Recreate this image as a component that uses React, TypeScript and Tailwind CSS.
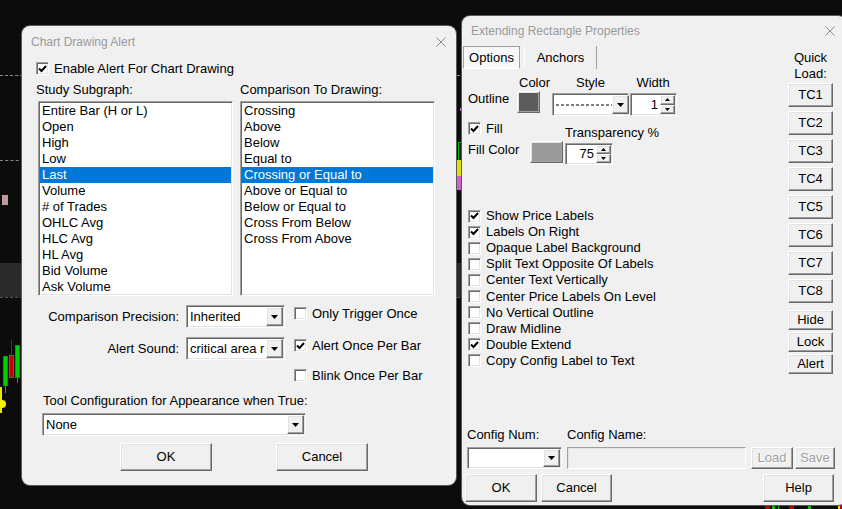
import React from "react";

const raised =
  "bg-[#f0f0f0] border border-t-white border-l-white border-r-[#696969] border-b-[#696969] shadow-[inset_-1px_-1px_#a0a0a0,inset_1px_1px_#e3e3e3]";
const raisedFrame =
  "border border-t-white border-l-white border-r-[#696969] border-b-[#696969] shadow-[inset_-1px_-1px_#a0a0a0,inset_1px_1px_#e3e3e3]";
const sunken =
  "border border-t-[#a0a0a0] border-l-[#a0a0a0] border-r-white border-b-white shadow-[inset_1px_1px_#696969,inset_-1px_-1px_#e3e3e3]";

const subgraphs = [
  "Entire Bar (H or L)",
  "Open",
  "High",
  "Low",
  "Last",
  "Volume",
  "# of Trades",
  "OHLC Avg",
  "HLC Avg",
  "HL Avg",
  "Bid Volume",
  "Ask Volume",
];

const comparisons = [
  "Crossing",
  "Above",
  "Below",
  "Equal to",
  "Crossing or Equal to",
  "Above or Equal to",
  "Below or Equal to",
  "Cross From Below",
  "Cross From Above",
];

const options = [
  { label: "Show Price Labels", on: true },
  { label: "Labels On Right", on: true },
  { label: "Opaque Label Background", on: false },
  { label: "Split Text Opposite Of Labels", on: false },
  { label: "Center Text Vertically", on: false },
  { label: "Center Price Labels On Level", on: false },
  { label: "No Vertical Outline", on: false },
  { label: "Draw Midline", on: false },
  { label: "Double Extend", on: true },
  { label: "Copy Config Label to Text", on: false },
];

function Check({ on = false }: { on?: boolean }) {
  return (
    <span className={`w-[13px] h-[13px] shrink-0 bg-white flex items-center justify-center ${sunken}`}>
      {on && (
        <svg width="9" height="8" viewBox="0 0 9 8">
          <polyline points="1,3.5 3.5,6 8,1" fill="none" stroke="#000" strokeWidth="2" />
        </svg>
      )}
    </span>
  );
}

function CloseX() {
  return (
    <svg width="10" height="10" viewBox="0 0 10 10">
      <path d="M0.5 0.5L9.5 9.5M9.5 0.5L0.5 9.5" stroke="#8a8a8a" strokeWidth="1" />
    </svg>
  );
}

function DropBtn() {
  return (
    <span className={`w-[17px] shrink-0 flex items-center justify-center ${raised}`}>
      <svg width="7" height="4" viewBox="0 0 7 4">
        <path d="M0 0h7L3.5 4z" fill="#000" />
      </svg>
    </span>
  );
}

function Combo({ className, children }: { className: string; children?: React.ReactNode }) {
  return (
    <div className={`flex p-[1px] bg-white ${sunken} ${className}`}>
      <span className="flex-1 min-w-0 overflow-hidden whitespace-nowrap pl-[2px] self-center">{children}</span>
      <DropBtn />
    </div>
  );
}

function Spin({ className, value }: { className: string; value: string }) {
  return (
    <div className={`flex p-[1px] bg-white ${sunken} ${className}`}>
      <span className="flex-1 text-right pr-[2px] self-center">{value}</span>
      <span className="w-[15px] flex flex-col">
        <span className={`flex-1 flex items-center justify-center ${raised}`}>
          <svg width="5" height="3" viewBox="0 0 5 3">
            <path d="M0 3h5L2.5 0z" fill="#000" />
          </svg>
        </span>
        <span className={`flex-1 flex items-center justify-center ${raised}`}>
          <svg width="5" height="3" viewBox="0 0 5 3">
            <path d="M0 0h5L2.5 3z" fill="#000" />
          </svg>
        </span>
      </span>
    </div>
  );
}

function Btn({
  className,
  children,
  disabled = false,
}: {
  className: string;
  children: React.ReactNode;
  disabled?: boolean;
}) {
  return (
    <div
      className={`flex items-center justify-center ${raised} ${className} ${
        disabled ? "text-[#a0a0a0] [text-shadow:1px_1px_#ffffff]" : ""
      }`}
    >
      {children}
    </div>
  );
}

function ListBox({ items, selected }: { items: string[]; selected: number }) {
  return (
    <div className={`w-[195px] h-[195px] bg-white p-[1px] overflow-hidden ${sunken}`}>
      {items.map((it, i) => (
        <div
          key={it}
          className={`h-4 leading-4 pl-[2px] whitespace-nowrap ${i === selected ? "bg-[#0078d7] text-white" : ""}`}
        >
          {it}
        </div>
      ))}
    </div>
  );
}

function Chart() {
  return (
    <>
      <div className="absolute left-0 top-[75px] w-[470px] border-t border-dashed border-[#8a8a8a]" />
      <div className="absolute left-0 top-[160px] w-[24px] border-t border-dashed border-[#8a8a8a]" />
      <div className="absolute left-0 top-[263px] w-[470px] h-[34px] bg-[#2a2a2a]" />
      <div className="absolute left-0 top-[297px] w-[470px] border-t border-dashed border-[#555]" />
      <div className="absolute left-[2px] top-[195px] w-[6px] h-[10px] bg-[#c09a9a]" />
      <div className="absolute left-[21px] top-[315px] w-[1px] h-[30px] bg-[#00c000]" />
      {/* candles */}
      <div className="absolute left-[5px] top-[385px] w-[1px] h-[8px] bg-[#00c000]" />
      <div className="absolute left-[3px] top-[356px] w-[5px] h-[30px] bg-[#00d000] border border-[#00a000]" />
      <div className="absolute left-[11px] top-[340px] w-[1px] h-[16px] bg-[#d00000]" />
      <div className="absolute left-[9px] top-[355px] w-[5px] h-[23px] bg-[#c00000] border border-[#00a000]" />
      <div className="absolute left-[17px] top-[378px] w-[1px] h-[5px] bg-[#00c000]" />
      <div className="absolute left-[15px] top-[345px] w-[5px] h-[33px] bg-[#00d000] border border-[#00a000]" />
      <div className="absolute left-0 top-[387px] w-[2px] h-[26px] bg-[#e8e800]" />
      <div className="absolute left-0 top-[400px] w-[6px] h-[8px] bg-[#f0f000] rounded-r-sm" />
      {/* between the dialogs */}
      <div className="absolute left-[460px] top-[108px] w-[2px] h-[3px] bg-[#d070d0]" />
      <div className="absolute left-[458px] top-[142px] w-[6px] h-[36px] border border-[#00c000]" />
      <div className="absolute left-[456px] top-[160px] w-[1px] h-[38px] bg-[#00c000]" />
      <div className="absolute left-[457px] top-[160px] w-[5px] h-[16px] bg-[#e0e000]" />
      <div className="absolute left-[457px] top-[176px] w-[4px] h-[14px] bg-[#d060d0]" />
      {/* bottom edge */}
      <div className="absolute left-[765px] top-[505px] w-[5px] h-[4px] bg-[#c00000]" />
      <div className="absolute left-[772px] top-[505px] w-[3px] h-[4px] bg-[#00c000]" />
      <div className="absolute left-[778px] top-[505px] w-[1px] h-[4px] bg-[#00c000]" />
      <div className="absolute left-[789px] top-[505px] w-[5px] h-[4px] bg-[#c00000]" />
      <div className="absolute left-[808px] top-[505px] w-[3px] h-[4px] bg-[#00c000]" />
      <div className="absolute left-[838px] top-[505px] w-[2px] h-[4px] bg-[#e0e000]" />
      <div className="absolute left-[840px] top-[505px] w-[2px] h-[4px] bg-[#c00000]" />
    </>
  );
}

function AlertDialog() {
  return (
    <div className="absolute left-[22px] top-[26px] w-[434px] h-[459px] rounded-lg bg-[#f0f0f0] shadow-[0_0_0_1px_#5a5a5a]">
      <div className="h-8 flex items-center justify-between pl-[9px] pr-[10px] text-[12px] text-[#9a9a9a]">
        <span>Chart Drawing Alert</span>
        <CloseX />
      </div>

      <div className="flex items-center gap-[5px] ml-[14px] mt-[4px] h-[13px]">
        <Check on />
        <span>Enable Alert For Chart Drawing</span>
      </div>

      <div className="flex mt-[7px] h-4 pl-[14px]">
        <span className="w-[204px]">Study Subgraph:</span>
        <span>Comparison To Drawing:</span>
      </div>

      <div className="flex mt-[3px] pl-[16px] gap-[7px]">
        <ListBox items={subgraphs} selected={4} />
        <ListBox items={comparisons} selected={4} />
      </div>

      <div className="flex mt-[9px] h-[23px]">
        <span className="w-[157px] text-right self-center">Comparison Precision:</span>
        <Combo className="ml-[7px] w-[99px] h-[23px]">Inherited</Combo>
        <div className="ml-[9px] mt-[2px] flex items-center gap-[5px] h-[13px]">
          <Check />
          <span>Only Trigger Once</span>
        </div>
      </div>

      <div className="flex mt-[9px] h-[23px]">
        <span className="w-[157px] text-right self-center">Alert Sound:</span>
        <Combo className="ml-[7px] w-[99px] h-[23px]">critical area r</Combo>
        <div className="ml-[9px] mt-[2px] flex items-center gap-[5px] h-[13px]">
          <Check on />
          <span>Alert Once Per Bar</span>
        </div>
      </div>

      <div className="flex mt-[9px] ml-[272px] items-center gap-[5px] h-[13px]">
        <Check />
        <span>Blink Once Per Bar</span>
      </div>

      <div className="mt-[11px] h-4 pl-[21px]">Tool Configuration for Appearance when True:</div>

      <Combo className="mt-[4px] ml-[20px] w-[264px] h-[23px]">None</Combo>

      <div className="flex mt-[7px]">
        <Btn className="ml-[98px] w-[92px] h-[28px]">OK</Btn>
        <Btn className="ml-[64px] w-[92px] h-[28px]">Cancel</Btn>
      </div>
    </div>
  );
}

function PropsDialog() {
  return (
    <div className="absolute left-[462px] top-[16px] w-[384px] h-[489px] rounded-lg bg-[#f0f0f0] shadow-[0_0_0_1px_#5a5a5a] flex flex-col">
      <div className="h-[30px] shrink-0 flex items-center justify-between pl-[9px] pr-[11px] text-[12px] text-[#9a9a9a]">
        <span>Extending Rectangle Properties</span>
        <CloseX />
      </div>

      <div className="flex">
        <div className="flex-1 flex flex-col">
          {/* tabs */}
          <div className="flex h-[23px] ml-[1px]">
            <div className="w-[57px] flex items-center justify-center border border-[#a0a0a0] border-b-white bg-[#f8f8f8]">
              Options
            </div>
            <div className="w-[4px]" />
            <div className="w-[73px] flex items-center justify-center border-l border-l-white border-r border-r-[#a0a0a0]">
              Anchors
            </div>
          </div>

          <div className="flex mt-[6px] h-4">
            <span className="ml-[57px] w-[33px]">Color</span>
            <span className="w-[77px] text-center">Style</span>
            <span className="w-[48px] text-center">Width</span>
          </div>

          <div className="flex items-start h-[25px]">
            <span className="ml-[6px] w-[49px] leading-4">Outline</span>
            <div className={`w-[23px] h-[22px] p-[1px] ${raisedFrame}`}>
              <div className="w-full h-full bg-[#5c5c5c]" />
            </div>
            <div className={`ml-[12px] mt-[2px] w-[77px] h-[23px] flex p-[1px] bg-white ${sunken}`}>
              <span className="flex-1 flex items-center pl-[2px]">
                <svg width="56" height="2" viewBox="0 0 56 2">
                  <line x1="0" y1="1" x2="56" y2="1" stroke="#000" strokeWidth="1" strokeDasharray="3 2" />
                </svg>
              </span>
              <DropBtn />
            </div>
            <Spin className="ml-[1px] mt-[2px] w-[47px] h-[23px]" value="1" />
          </div>

          <div className="flex items-start mt-[6px] h-[19px]">
            <div className="w-[103px] pl-[6px] flex items-center gap-[5px] h-[13px]">
              <Check on />
              <span>Fill</span>
            </div>
            <span className="mt-[3px] leading-4">Transparency %</span>
          </div>

          <div className="flex items-start h-[24px]">
            <span className="ml-[6px] w-[62px] mt-[1px] leading-4">Fill Color</span>
            <div className={`w-[33px] h-[22px] p-[1px] ${raisedFrame}`}>
              <div className="w-full h-full bg-[#9a9a9a]" />
            </div>
            <Spin className="ml-[2px] mt-[2px] w-[48px] h-[22px]" value="75" />
          </div>

          <div className="mt-[43px] flex flex-col">
            {options.map((o) => (
              <div key={o.label} className="h-[16.1px] flex items-center gap-[5px] pl-[6px] whitespace-nowrap">
                <Check on={o.on} />
                <span>{o.label}</span>
              </div>
            ))}
          </div>
        </div>

        <div className="w-[45px] mr-[13px] flex flex-col">
          <div className="mt-[4px] text-center leading-4">
            Quick
            <br />
            Load:
          </div>
          <div className="mt-[1px] flex flex-col gap-[4px]">
            {["TC1", "TC2", "TC3", "TC4", "TC5", "TC6", "TC7", "TC8"].map((t) => (
              <Btn key={t} className="h-[24px]">
                {t}
              </Btn>
            ))}
          </div>
          <div className="mt-[7px] flex flex-col gap-[2px]">
            <Btn className="h-[20px]">Hide</Btn>
            <Btn className="h-[20px]">Lock</Btn>
            <Btn className="h-[20px]">Alert</Btn>
          </div>
        </div>
      </div>

      <div className="mt-auto pb-[3px]">
        <div className="flex h-4">
          <span className="ml-[5px] w-[100px]">Config Num:</span>
          <span>Config Name:</span>
        </div>
        <div className="flex mt-[4px] h-[22px]">
          <Combo className="ml-[5px] w-[95px] h-[22px]" />
          <div className="ml-[5px] w-[179px] h-[22px] border border-t-[#a0a0a0] border-l-[#a0a0a0] border-r-white border-b-white shadow-[inset_1px_1px_#e3e3e3] bg-[#f0f0f0]" />
          <Btn className="ml-[5px] w-[42px] h-[22px]" disabled>
            Load
          </Btn>
          <Btn className="ml-[2px] w-[40px] h-[22px]" disabled>
            Save
          </Btn>
        </div>
        <div className="flex mt-[5px] h-[28px]">
          <Btn className="ml-[3px] w-[72px] h-[28px]">OK</Btn>
          <Btn className="ml-[4px] w-[71px] h-[28px]">Cancel</Btn>
          <Btn className="ml-auto mr-[12px] w-[71px] h-[28px]">Help</Btn>
        </div>
      </div>
    </div>
  );
}

export default function App() {
  return (
    <div className="relative w-[842px] h-[509px] overflow-hidden bg-[#0c0c0c] font-['Liberation_Sans',Arial,sans-serif] text-[13px] leading-4 text-black">
      <Chart />
      <AlertDialog />
      <PropsDialog />
    </div>
  );
}
